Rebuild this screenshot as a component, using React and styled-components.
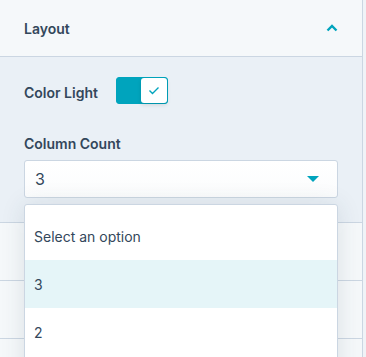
import React from "react";
import styled, { createGlobalStyle } from "styled-components";

const GlobalStyle = createGlobalStyle`
  html, body {
    margin: 0;
    padding: 0;
    background: #f0f3f7;
    font-family: "Inter", "Noto Sans", sans-serif;
    color: #33475b;
  }
`;

const Panel = styled.div`
  position: relative;
  width: 362px;
  height: 357px;
  overflow: hidden;
  border-right: 1px solid #cbd6e2;
  background: #f5f8fa;
`;

const SectionHeader = styled.div`
  display: flex;
  align-items: center;
  justify-content: space-between;
  height: ${(props) => props.height || 57}px;
  padding: 0 24px;
  background: #f5f8fa;
  border-bottom: 1px solid #cbd6e2;
  box-sizing: border-box;
  font-size: 14px;
  font-weight: 600;
`;

const SectionBody = styled.div`
  background: #eaf0f6;
  padding: 20px 24px 24px;
  border-bottom: 1px solid #cbd6e2;
`;

const Row = styled.div`
  display: flex;
  align-items: center;
  gap: 18px;
`;

const Label = styled.div`
  font-size: 14px;
  font-weight: 600;
  line-height: 18px;
  padding-top: ${(props) => props.shift || 0}px;
`;

const Toggle = styled.div`
  display: flex;
  width: 52px;
  height: 27px;
  border-radius: 3px;
  background: #00a4bd;
  border: 1px solid #00a4bd;
  box-sizing: border-box;
  justify-content: flex-end;
`;

const Knob = styled.div`
  width: 26px;
  height: 100%;
  background: #fff;
  border-radius: 3px;
  display: flex;
  align-items: center;
  justify-content: center;
  box-shadow: 0 2px 4px rgba(0, 0, 0, 0.12);
`;

const Field = styled.div`
  margin-top: 31px;
  position: relative;
`;

const Select = styled.div`
  margin-top: 7px;
  height: 38px;
  box-sizing: border-box;
  background: linear-gradient(#fff, #fbfcfd);
  border: 1px solid #cbd6e2;
  border-radius: 3px;
  display: flex;
  align-items: center;
  justify-content: space-between;
  padding: 0 18px 0 10px;
  font-size: 16px;
`;

const Caret = styled.div`
  width: 0;
  height: 0;
  border-left: 6px solid transparent;
  border-right: 6px solid transparent;
  border-top: 6px solid #00a4bd;
`;

const Menu = styled.div`
  position: absolute;
  left: 0;
  right: 0;
  top: 69px;
  min-height: 200px;
  background: #fff;
  border: 1px solid #cbd6e2;
  border-radius: 3px 3px 0 0;
  box-shadow: 0 1px 24px rgba(45, 62, 80, 0.12);
  padding-top: 7px;
  z-index: 2;
`;

const Option = styled.div`
  height: 48px;
  display: flex;
  align-items: center;
  padding: 0 9px;
  font-size: 14px;
  background: ${(props) => (props.active ? "#e5f5f8" : "#fff")};
`;

export default function App() {
  return (
    <>
      <GlobalStyle />
      <Panel>
        <SectionHeader>
          <span>Layout</span>
          <svg width="12" height="8" viewBox="0 0 12 8">
            <path d="M1.5 6.5 L6 2 L10.5 6.5" fill="none" stroke="#00a4bd" strokeWidth="2.4" />
          </svg>
        </SectionHeader>
        <SectionBody>
          <Row>
            <Label shift={4}>Color Light</Label>
            <Toggle>
              <Knob>
                <svg width="12" height="9" viewBox="0 0 12 9">
                  <path d="M1.5 4.5 L4.5 7.5 L10.5 1.5" fill="none" stroke="#00a4bd" strokeWidth="1.4" />
                </svg>
              </Knob>
            </Toggle>
          </Row>
          <Field>
            <Label>Column Count</Label>
            <Select>
              <span>3</span>
              <Caret />
            </Select>
            <Menu>
              <Option>Select an option</Option>
              <Option active>3</Option>
              <Option>2</Option>
            </Menu>
          </Field>
        </SectionBody>
        <SectionHeader height={58} />
        <SectionHeader height={58} />
      </Panel>
    </>
  );
}
